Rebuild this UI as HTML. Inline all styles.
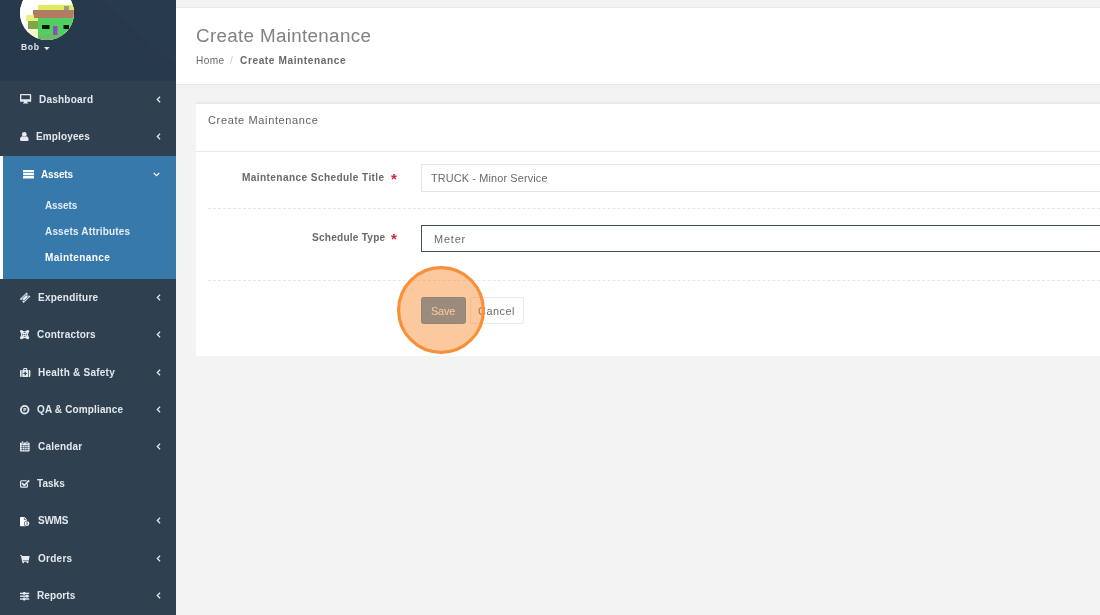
<!DOCTYPE html>
<html lang="en">
<head>
<meta charset="utf-8">
<title>Create Maintenance</title>
<style>
html,body{margin:0;padding:0;}
body{width:1100px;height:615px;overflow:hidden;position:relative;background:#f3f3f4;font-family:"Liberation Sans",Arial,sans-serif;color:#676a6c;font-size:10.4px;}
*{box-sizing:border-box;}
.abs{position:absolute;white-space:nowrap;}
#side{position:absolute;left:0;top:0;width:176px;height:615px;background:#2f4050;overflow:hidden;}
#hdr{position:absolute;left:0;top:0;width:176px;height:80.6px;background:#273a4b;overflow:hidden;}
#act{position:absolute;left:0;top:155.6px;width:176px;height:123px;background:#3879ab;border-left:3px solid #fff;}

svg.ic{position:absolute;overflow:visible;}
#topline{position:absolute;left:176px;top:0;width:924px;height:8px;background:#f3f3f4;border-bottom:1px solid #e7eaec;}
#heading{position:absolute;left:176px;top:8px;width:924px;height:77px;background:#fff;border-bottom:1px solid #e7eaec;}
#ibox{position:absolute;left:196px;top:102px;width:904px;height:254px;background:#fff;border-top:2px solid #e7eaec;}
#ibox .sep{position:absolute;left:0;top:47px;width:904px;height:1px;background:#e7eaec;}
.dash{position:absolute;left:208px;width:892px;height:0;border-top:1px dashed #e4e7e9;}
.tx,.nt{will-change:transform;}
.tx{position:absolute;white-space:nowrap;height:20px;line-height:20px;}
.b{font-weight:bold;}
.req{color:#c9302c;}
.inp{position:absolute;left:421px;width:700px;background:#fff;border:1px solid #e5e6e7;}
</style>
</head>
<body>
<div id="side">
  <div id="hdr">
    <svg width="176" height="81" style="position:absolute;left:0;top:0">
      <polygon points="97,0 176,0 176,70" fill="#283b4c"/>
      <polygon points="92,0 100,0 176,66 176,74" fill="#26384a"/>
    </svg>
    <div style="position:absolute;left:20px;top:-14px;width:54px;height:54px;border-radius:50%;overflow:hidden;background:#fff"><svg width="54" height="54" viewBox="20 -14 54 54" style="display:block">
      <g>
        <rect x="17" y="-20" width="60" height="64" fill="#fff"/>
        <rect x="38" y="5" width="37" height="6" fill="#dcec5c"/>
        <rect x="64" y="6" width="5" height="4" fill="#9a9a92"/>
        <rect x="33" y="10" width="42" height="8" fill="#b37b62"/>
        <rect x="26" y="15" width="8" height="6" fill="#e6f27c"/><rect x="30" y="29" width="8" height="9" fill="#f3f8c4"/>
        <rect x="33" y="18" width="6" height="3" fill="#e0f070"/>
        <rect x="38" y="18" width="37" height="23" fill="#52cf62"/>
        <rect x="28" y="21" width="10" height="8" fill="#7fa64a"/>
        <rect x="42" y="25" width="7.5" height="4" fill="#061a06"/>
        <rect x="63.5" y="25" width="5.5" height="4" fill="#061a06"/>
        <rect x="53" y="26" width="4.5" height="9" fill="#8a52b8"/>
        <rect x="38" y="35" width="37" height="6" fill="#6fb86a"/>
      </g>
    </svg></div>
        <svg class="ic" width="6" height="4" style="left:44.3px;top:47.2px"><polygon points="0,0 5.6,0 2.8,3.2" fill="#dfe4ed"/></svg>
  </div>
  <div id="act"></div>
<svg class="ic" width="11.2" height="9.6" viewBox="0 0 11.2 9.6" style="left:19.9px;top:94.3px"><path d="M0.9 0h9.4a0.9 0.9 0 0 1 0.9 0.9v6a0.9 0.9 0 0 1-0.9 0.9h-3.3l0.3 1h0.9v0.8h-5.2v-0.8h0.9l0.3-1h-3.3a0.9 0.9 0 0 1-0.9-0.9v-6a0.9 0.9 0 0 1 0.9-0.9zM1.3 1.3v4h8.6v-4z" fill="#e6ebf1" fill-rule="evenodd"/></svg>
<span class="tx b" style="left:39.0px;top:89.73px;font-size:10.0px;color:#e3e8ee;letter-spacing:0.230px">Dashboard</span>
<svg class="ic" width="5" height="7" viewBox="0 0 5 7" style="left:156px;top:96.2px"><path d="M4.1 0.7L1.3 3.5L4.1 6.3" fill="none" stroke="#dfe5ec" stroke-width="1.3"/></svg>
<svg class="ic" width="8.6" height="9" viewBox="0 0 8.6 9" style="left:19.9px;top:132.0px"><circle cx="4.3" cy="2.4" r="2.4" fill="#e6ebf1"/><path d="M0 8.1c0-2.6 1.2-3.7 2.3-3.8c0.6 0.5 1.2 0.8 2 0.8s1.4-0.3 2-0.8c1.1 0.1 2.3 1.2 2.3 3.8c0 0.6-0.6 0.9-1.2 0.9h-6.2c-0.6 0-1.2-0.3-1.2-0.9z" fill="#e6ebf1"/></svg>
<span class="tx b" style="left:36.0px;top:126.73px;font-size:10.0px;color:#e3e8ee;letter-spacing:0.132px">Employees</span>
<svg class="ic" width="5" height="7" viewBox="0 0 5 7" style="left:156px;top:133.2px"><path d="M4.1 0.7L1.3 3.5L4.1 6.3" fill="none" stroke="#dfe5ec" stroke-width="1.3"/></svg>
<svg class="ic" width="11" height="8.4" viewBox="0 0 11 8.4" style="left:22.6px;top:170.0px"><rect x="0" y="0" width="11" height="2.3" rx="0.3" fill="#fff"/><rect x="0" y="3.05" width="11" height="2.3" rx="0.3" fill="#fff"/><rect x="0" y="6.1" width="11" height="2.3" rx="0.3" fill="#fff"/></svg>
<span class="tx b" style="left:41.0px;top:164.73px;font-size:10.0px;color:#fff;letter-spacing:-0.135px">Assets</span>
<svg class="ic" width="7" height="5" viewBox="0 0 7 5" style="left:153.3px;top:171.89999999999998px"><path d="M0.7 0.9L3.5 3.7L6.3 0.9" fill="none" stroke="#fff" stroke-width="1.3"/></svg>
<svg class="ic" width="10.2" height="9.6" viewBox="0 0 10.2 9.6" style="left:19.8px;top:292.8px"><g transform="translate(5.1 4.8) rotate(-43)"><path d="M-4.7 -2.7h9.4v1.5a1.2 1.2 0 0 0 0 2.4v1.5h-9.4v-1.5a1.2 1.2 0 0 0 0-2.4z" fill="#e6ebf1"/><rect x="-3" y="-1.55" width="6" height="3.1" fill="none" stroke="#2f4050" stroke-width="0.65"/></g></svg>
<span class="tx b" style="left:38.4px;top:287.74px;font-size:10.0px;color:#e3e8ee;letter-spacing:0.237px">Expenditure</span>
<svg class="ic" width="5" height="7" viewBox="0 0 5 7" style="left:156px;top:294.2px"><path d="M4.1 0.7L1.3 3.5L4.1 6.3" fill="none" stroke="#dfe5ec" stroke-width="1.3"/></svg>
<svg class="ic" width="9.2" height="9.2" viewBox="0 0 9.2 9.2" style="left:19.9px;top:330.0px"><g fill="none" stroke="#e6ebf1" stroke-width="1.7" stroke-linecap="round"><path d="M1.8 1.8L7.4 7.4M7.4 1.8L1.8 7.4"/></g><g fill="#e6ebf1"><circle cx="1.5" cy="1.5" r="1.5"/><circle cx="7.7" cy="1.5" r="1.5"/><circle cx="1.5" cy="7.7" r="1.5"/><circle cx="7.7" cy="7.7" r="1.5"/></g><g fill="none" stroke="#e6ebf1" stroke-width="1.1"><path d="M2.6 1.2Q4.6 2.4 6.6 1.2M2.6 8Q4.6 6.8 6.6 8M1.2 2.6Q2.4 4.6 1.2 6.6M8 2.6Q6.8 4.6 8 6.6"/></g><circle cx="4.6" cy="4.6" r="0.6" fill="#2f4050"/></svg>
<span class="tx b" style="left:36.9px;top:324.74px;font-size:10.0px;color:#e3e8ee;letter-spacing:0.201px">Contractors</span>
<svg class="ic" width="5" height="7" viewBox="0 0 5 7" style="left:156px;top:331.2px"><path d="M4.1 0.7L1.3 3.5L4.1 6.3" fill="none" stroke="#dfe5ec" stroke-width="1.3"/></svg>
<svg class="ic" width="10.4" height="9" viewBox="0 0 10.4 9" style="left:19.8px;top:368.1px"><path d="M3.2 1.9v-1a0.9 0.9 0 0 1 0.9-0.9h2.2a0.9 0.9 0 0 1 0.9 0.9v1h-1v-0.8h-2v0.8z" fill="#e6ebf1"/><path d="M0.9 1.9h0.7v7.1h-0.7a0.9 0.9 0 0 1-0.9-0.9v-5.3a0.9 0.9 0 0 1 0.9-0.9zM2.3 1.9h5.8v7.1h-5.8zM8.8 1.9h0.7a0.9 0.9 0 0 1 0.9 0.9v5.3a0.9 0.9 0 0 1-0.9 0.9h-0.7z" fill="#e6ebf1"/><path d="M4.6 3.6h1.2v1.3h1.3v1.2h-1.3v1.3h-1.2v-1.3h-1.3v-1.2h1.3z" fill="#2f4050"/></svg>
<span class="tx b" style="left:38.4px;top:362.74px;font-size:10.0px;color:#e3e8ee;letter-spacing:0.243px">Health &amp; Safety</span>
<svg class="ic" width="5" height="7" viewBox="0 0 5 7" style="left:156px;top:369.2px"><path d="M4.1 0.7L1.3 3.5L4.1 6.3" fill="none" stroke="#dfe5ec" stroke-width="1.3"/></svg>
<svg class="ic" width="9.4" height="9.4" viewBox="0 0 9.4 9.4" style="left:19.8px;top:404.8px"><circle cx="4.7" cy="4.7" r="4.7" fill="#e6ebf1"/><circle cx="4.7" cy="4.7" r="2.9" fill="#2f4050"/><path d="M3.5 2.9h1.6a1.3 1.3 0 0 1 0 2.6h-0.6v1.1h-1zM4.5 3.7v1h0.5a0.5 0.5 0 0 0 0-1z" fill="#e6ebf1" fill-rule="evenodd"/></svg>
<span class="tx b" style="left:36.9px;top:399.74px;font-size:10.0px;color:#e3e8ee;letter-spacing:0.147px">QA &amp; Compliance</span>
<svg class="ic" width="5" height="7" viewBox="0 0 5 7" style="left:156px;top:406.2px"><path d="M4.1 0.7L1.3 3.5L4.1 6.3" fill="none" stroke="#dfe5ec" stroke-width="1.3"/></svg>
<svg class="ic" width="9.6" height="10.6" viewBox="0 0 9.6 10.6" style="left:20.0px;top:441.0px"><path d="M0.8 1.4h8a0.8 0.8 0 0 1 0.8 0.8v7.6a0.8 0.8 0 0 1-0.8 0.8h-8a0.8 0.8 0 0 1-0.8-0.8v-7.6a0.8 0.8 0 0 1 0.8-0.8z" fill="#e6ebf1"/><rect x="1.8" y="0" width="1.7" height="2.9" rx="0.8" fill="#e6ebf1" stroke="#2f4050" stroke-width="0.5"/><rect x="6.1" y="0" width="1.7" height="2.9" rx="0.8" fill="#e6ebf1" stroke="#2f4050" stroke-width="0.5"/><g stroke="#2f4050" stroke-width="0.7" opacity="0.8" fill="none"><path d="M0.9 4.5h7.8M0.9 6.5h7.8M0.9 8.5h7.8M2.5 4.5v5.2M4.8 4.5v5.2M7.1 4.5v5.2"/></g></svg>
<span class="tx b" style="left:37.6px;top:436.74px;font-size:10.0px;color:#e3e8ee;letter-spacing:0.200px">Calendar</span>
<svg class="ic" width="5" height="7" viewBox="0 0 5 7" style="left:156px;top:443.2px"><path d="M4.1 0.7L1.3 3.5L4.1 6.3" fill="none" stroke="#dfe5ec" stroke-width="1.3"/></svg>
<svg class="ic" width="10" height="8.6" viewBox="0 0 10 8.6" style="left:19.9px;top:478.6px"><path d="M1.5 1.2h5.2v1.1h-5a0.5 0.5 0 0 0-0.5 0.5v4.2a0.5 0.5 0 0 0 0.5 0.5h4.6a0.5 0.5 0 0 0 0.5-0.5v-1.6l1.2-1.2v3a1.5 1.5 0 0 1-1.5 1.5h-5a1.5 1.5 0 0 1-1.5-1.5v-4.5a1.5 1.5 0 0 1 1.5-1.5z" fill="#e6ebf1"/><path d="M2.6 3.6l1.7 1.7l4.3-4.5l1.2 1.1l-5.5 5.7l-2.9-2.9z" fill="#e6ebf1"/></svg>
<span class="tx b" style="left:37.4px;top:473.74px;font-size:10.0px;color:#e3e8ee;letter-spacing:0.035px">Tasks</span>
<svg class="ic" width="9.6" height="9.2" viewBox="0 0 9.6 9.2" style="left:20.2px;top:516.9px"><path d="M0.9 0h3.6l2.3 2.3v6a0.9 0.9 0 0 1-0.9 0.9h-5a0.9 0.9 0 0 1-0.9-0.9v-7.4a0.9 0.9 0 0 1 0.9-0.9z" fill="#fff"/><path d="M4.3 0.7v1.9h1.9" fill="none" stroke="#2f4050" stroke-width="0.7"/><circle cx="7" cy="6.6" r="2.9" fill="#2f4050"/><circle cx="7" cy="6.6" r="2.3" fill="#fff"/><path d="M6.3 6.2l0.9-0.8v2.6" fill="none" stroke="#2f4050" stroke-width="0.8"/></svg>
<span class="tx b" style="left:38.1px;top:510.74px;font-size:10.0px;color:#e3e8ee;letter-spacing:-0.252px">SWMS</span>
<svg class="ic" width="5" height="7" viewBox="0 0 5 7" style="left:156px;top:517.2px"><path d="M4.1 0.7L1.3 3.5L4.1 6.3" fill="none" stroke="#dfe5ec" stroke-width="1.3"/></svg>
<svg class="ic" width="9.6" height="8.2" viewBox="0 0 9.6 8.2" style="left:20.2px;top:554.6px"><path d="M0 0.2h1.9l0.35 0.9h7.35l-0.8 4.3h-5.9l0.15 0.6h5.5v0.8h-6.4l-1.15-5.7h-1z" fill="#e6ebf1"/><circle cx="3.2" cy="7.3" r="0.95" fill="#e6ebf1"/><circle cx="7.5" cy="7.3" r="0.95" fill="#e6ebf1"/></svg>
<span class="tx b" style="left:37.6px;top:548.74px;font-size:10.0px;color:#e3e8ee;letter-spacing:0.267px">Orders</span>
<svg class="ic" width="5" height="7" viewBox="0 0 5 7" style="left:156px;top:555.2px"><path d="M4.1 0.7L1.3 3.5L4.1 6.3" fill="none" stroke="#dfe5ec" stroke-width="1.3"/></svg>
<svg class="ic" width="9.2" height="8.4" viewBox="0 0 9.2 8.4" style="left:19.9px;top:591.8px"><g fill="#e6ebf1"><rect x="0" y="0.7" width="9.2" height="1.4"/><rect x="0" y="3.5" width="9.2" height="1.4"/><rect x="0" y="6.3" width="9.2" height="1.4"/><rect x="3.2" y="0" width="2.1" height="2.8" rx="0.3"/><rect x="5.9" y="2.8" width="2.1" height="2.8" rx="0.3"/><rect x="3.2" y="5.6" width="2.1" height="2.8" rx="0.3"/></g></svg>
<span class="tx b" style="left:36.9px;top:585.74px;font-size:10.0px;color:#e3e8ee;letter-spacing:0.086px">Reports</span>
<svg class="ic" width="5" height="7" viewBox="0 0 5 7" style="left:156px;top:592.2px"><path d="M4.1 0.7L1.3 3.5L4.1 6.3" fill="none" stroke="#dfe5ec" stroke-width="1.3"/></svg>
<span class="tx b" style="left:44.8px;top:195.73px;font-size:10.0px;color:#e4edf5;letter-spacing:-0.119px">Assets</span>
<span class="tx b" style="left:44.8px;top:221.73px;font-size:10.0px;color:#e4edf5;letter-spacing:0.163px">Assets Attributes</span>
<span class="tx b" style="left:44.8px;top:247.73px;font-size:10.0px;color:#fff;letter-spacing:0.420px">Maintenance</span>
<span class="tx b" style="left:20.6px;top:37.42px;font-size:8.6px;color:#dfe4ed;letter-spacing:0.627px">Bob</span>
</div>
<div id="topline"></div>
<div id="heading"></div>
<div id="ibox"><div class="sep"></div></div>
<div class="inp" style="top:164px;height:28px;"></div>
<div class="dash" style="top:208px"></div>
<div class="inp" style="top:225px;height:27px;border-color:#3c515b;"></div>
<div class="dash" style="top:280px"></div>
<div class="abs" style="left:421px;top:297px;width:45px;height:27px;background:#5593c1;border:1px solid #4f86b0;border-radius:2.4px"></div>
<div class="abs" style="left:469.5px;top:297px;width:54px;height:27px;background:#fff;border:1px solid #e7eaec;border-radius:2.4px"></div>
<span class="tx" style="left:195.6px;top:25.69px;font-size:18.8px;color:#808284;letter-spacing:0.337px">Create Maintenance</span>
<span class="tx" style="left:196.3px;top:50.50px;font-size:10.1px;letter-spacing:0.416px">Home</span>
<span class="tx" style="left:230.4px;top:50.50px;font-size:10.1px;color:#c8cacc">/</span>
<span class="tx b" style="left:240.3px;top:50.50px;font-size:10.1px;letter-spacing:0.601px">Create Maintenance</span>
<span class="tx" style="left:208.2px;top:110.19px;font-size:11.0px;color:#5f6264;letter-spacing:0.635px">Create Maintenance</span>
<span class="tx b" style="left:242.4px;top:167.50px;font-size:10.1px;letter-spacing:0.400px">Maintenance Schedule Title</span>
<span class="tx b" style="left:391.0px;top:168.80px;font-size:15px;color:#c9283a">*</span>
<span class="tx" style="left:431px;top:168.12px;font-size:10.9px;letter-spacing:0.135px">TRUCK - Minor Service</span>
<span class="tx b" style="left:311.6px;top:227.50px;font-size:10.1px;letter-spacing:0.223px">Schedule Type</span>
<span class="tx b" style="left:391.0px;top:228.80px;font-size:15px;color:#c9283a">*</span>
<span class="tx" style="left:434.0px;top:229.22px;font-size:10.9px;letter-spacing:0.831px">Meter</span>
<span class="tx" style="left:431px;top:300.82px;font-size:10.9px;color:#fff;letter-spacing:-0.207px">Save</span>
<span class="tx" style="left:477.6px;top:300.82px;font-size:10.9px;color:#676a6c;letter-spacing:0.516px">Cancel</span>
<svg class="ic" width="92" height="92" viewBox="0 0 92 92" style="left:395px;top:264px"><circle cx="46" cy="46" r="42.4" fill="rgba(247,130,32,0.43)" stroke="#f6913a" stroke-width="3.2"/></svg>
</body>
</html>
